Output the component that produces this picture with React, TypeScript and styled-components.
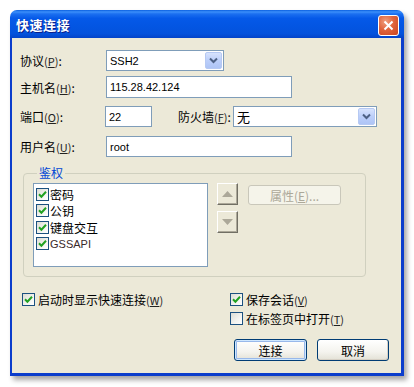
import React from "react";
import styled, { createGlobalStyle } from "styled-components";

const Global = createGlobalStyle`
  * { box-sizing: border-box; }
  body {
    margin: 0;
    padding: 10px;
    background: #ffffff;
    font-family: "Noto Sans CJK SC", "Liberation Sans", sans-serif;
    font-size: 12px;
    color: #000;
  }
`;

const Win = styled.div`
  width: 394px;
  height: 366px;
  display: flex;
  flex-direction: column;
  border-radius: 7px 7px 0 0;
  box-shadow: 3px 4px 5px rgba(0, 0, 0, 0.35);
`;

const TitleBar = styled.div`
  height: 28px;
  flex: none;
  display: flex;
  align-items: center;
  justify-content: space-between;
  padding: 0 5px 0 6px;
  border-radius: 7px 7px 0 0;
  background: linear-gradient(
    to bottom,
    #0a5fe0 0%,
    #3c8ffa 7%,
    #1b6ff0 14%,
    #0559e8 30%,
    #0355e2 60%,
    #0452dc 85%,
    #0343c9 100%
  );
`;

const Title = styled.span`
  color: #fff;
  font-weight: bold;
  font-size: 13px;
  letter-spacing: 0.5px;
  text-shadow: 1px 1px 0 #0a1e8a;
  padding-top: 1px;
`;

const CloseBtn = styled.div`
  width: 21px;
  height: 21px;
  margin-top: 2px;
  border: 1px solid #fff;
  border-radius: 3px;
  background: radial-gradient(circle at 35% 30%, #f0a080 0%, #e0643c 45%, #c84420 100%);
  display: flex;
  align-items: center;
  justify-content: center;
`;

const Body = styled.div`
  flex: 1;
  background: #ece9d8;
  border-left: 2px solid #0b3dcc;
  border-right: 3px solid #0b3dcc;
  border-bottom: 3px solid #0b3dcc;
  padding: 0 0 0 8px;
  display: flex;
  flex-direction: column;
`;

const Row = styled.div<{ $top: number; $h: number }>`
  display: flex;
  align-items: center;
  margin-top: ${(p) => p.$top}px;
  height: ${(p) => p.$h}px;
`;

const Label = styled.span<{ $w?: number; $pad?: number }>`
  width: ${(p) => (p.$w ? `${p.$w}px` : "auto")};
  padding-left: ${(p) => p.$pad ?? 0}px;
  flex: none;
  white-space: nowrap;
  font-size: 12px;
`;

const Key = styled.span`
  color: #222;
  font-size: 11px;
  & u { text-underline-offset: 1px; }
`;

const TextBox = styled.div<{ $w: number }>`
  width: ${(p) => p.$w}px;
  height: 100%;
  background: #fff;
  border: 1px solid #7f9db9;
  display: flex;
  align-items: center;
  padding-left: 3px;
  font-family: "Liberation Sans", sans-serif;
  font-size: 11px;
`;

const SelectBox = styled.div<{ $w: number }>`
  width: ${(p) => p.$w}px;
  height: 100%;
  background: #fff;
  border: 1px solid #7f9db9;
  display: flex;
  align-items: center;
  justify-content: space-between;
  padding: 1px 1px 1px 3px;
`;

const SelectValue = styled.span<{ $cjk?: boolean }>`
  font-family: ${(p) => (p.$cjk ? '"Noto Sans CJK SC", sans-serif' : '"Liberation Sans", sans-serif')};
  font-size: ${(p) => (p.$cjk ? 13 : 11)}px;
`;

const DropBtn = styled.div`
  width: 17px;
  height: 17px;
  border: 1px solid #b6c9f3;
  border-radius: 2px;
  background: linear-gradient(to bottom, #d7e3fd 0%, #bccffa 50%, #aec4f6 100%);
  display: flex;
  align-items: center;
  justify-content: center;
`;

const Group = styled.fieldset`
  margin: 9px 0 0 3px;
  width: 343px;
  height: 111px;
  border: 1px solid #d0d0bf;
  border-radius: 4px;
  padding: 3px 0 0 9px;
  display: flex;
  align-items: flex-start;
`;

const Legend = styled.legend`
  color: #0046d5;
  padding: 0 2px;
  margin-left: 4px;
  font-size: 12px;
  line-height: 14px;
`;

const ListBox = styled.div`
  width: 175px;
  height: 84px;
  background: #fff;
  border: 1px solid #7f9db9;
  padding: 2px 0 0 2px;
  display: flex;
  flex-direction: column;
`;

const ListItem = styled.div`
  height: 16.5px;
  display: flex;
  align-items: center;
  gap: 1px;
  font-size: 12px;
`;

const ListLatin = styled.span`
  font-family: "Liberation Sans", sans-serif;
  font-size: 11px;
  color: #3a2a2a;
`;

const ArrowCol = styled.div`
  display: flex;
  flex-direction: column;
  gap: 6px;
  margin-left: 9px;
`;

const ArrowBtn = styled.div`
  width: 21px;
  height: 22px;
  background: #ece9d8;
  border-top: 1px solid #fff;
  border-left: 1px solid #fff;
  border-right: 1px solid #716f64;
  border-bottom: 1px solid #716f64;
  box-shadow: inset -1px -1px 0 #aca899;
  display: flex;
  align-items: center;
  justify-content: center;
`;

const PropBtn = styled.div`
  width: 93px;
  height: 20px;
  margin: 2px 0 0 10px;
  border: 1px solid #c9c7ba;
  border-radius: 3px;
  background: #f5f4ea;
  color: #aca899;
  display: flex;
  align-items: center;
  justify-content: center;
  font-size: 12px;
`;

const Options = styled.div`
  display: grid;
  grid-template-columns: 208px 1fr;
  grid-auto-rows: 19px;
  margin: 13px 0 0 2px;
`;

const Check = styled.label<{ $col: number }>`
  grid-column: ${(p) => p.$col};
  display: flex;
  align-items: center;
  gap: 3px;
  font-size: 12px;
  white-space: nowrap;
`;

const Box = styled.span`
  width: 13px;
  height: 13px;
  flex: none;
  border: 1px solid #1c5180;
  background: linear-gradient(135deg, #dcdcd4 0%, #f4f4f0 60%, #ffffff 100%);
  display: flex;
  align-items: center;
  justify-content: center;
`;

const Buttons = styled.div`
  display: flex;
  justify-content: flex-end;
  gap: 10px;
  margin-top: 11px;
  padding-right: 12px;
`;

const Btn = styled.div<{ $default?: boolean; $w: number }>`
  width: ${(p) => p.$w}px;
  height: 22px;
  border: 1px solid #003c74;
  border-radius: 3px;
  background: linear-gradient(to bottom, #ffffff 0%, #f4f3ee 60%, #e3e1d6 100%);
  box-shadow: ${(p) =>
    p.$default
      ? "inset 0 0 0 1px #cee7ff, inset 0 0 0 2px #98b8ea"
      : "inset -1px -1px 0 #d6d0c5"};
  display: flex;
  align-items: center;
  justify-content: center;
  font-size: 12px;
`;

const Mn = ({ k }: { k: string }) => (
  <Key>
    (<u>{k}</u>)
  </Key>
);

const CheckBox = ({ checked }: { checked: boolean }) => (
  <Box>
    {checked && (
      <svg width="9" height="9" viewBox="0 0 9 9">
        <path d="M1 4.3 L3.4 6.7 L8 1.8" fill="none" stroke="#21a121" strokeWidth="2" />
      </svg>
    )}
  </Box>
);

const Chevron = () => (
  <svg width="9" height="7" viewBox="0 0 9 7">
    <path d="M1 1.5 L4.5 5 L8 1.5" fill="none" stroke="#4d6185" strokeWidth="2" />
  </svg>
);

export default function App() {
  return (
    <>
      <Global />
      <Win>
        <TitleBar>
          <Title>快速连接</Title>
          <CloseBtn>
            <svg width="11" height="11" viewBox="0 0 11 11">
              <path d="M1.5 1.5 L9.5 9.5 M9.5 1.5 L1.5 9.5" stroke="#fff" strokeWidth="2" />
            </svg>
          </CloseBtn>
        </TitleBar>
        <Body>
          <Row $top={12} $h={21}>
            <Label $w={86}>
              协议<Mn k="P" />:
            </Label>
            <SelectBox $w={118}>
              <SelectValue>SSH2</SelectValue>
              <DropBtn>
                <Chevron />
              </DropBtn>
            </SelectBox>
          </Row>
          <Row $top={5} $h={22}>
            <Label $w={86}>
              主机名<Mn k="H" />:
            </Label>
            <TextBox $w={186}>115.28.42.124</TextBox>
          </Row>
          <Row $top={8} $h={21}>
            <Label $w={85}>
              端口<Mn k="O" />:
            </Label>
            <TextBox $w={47}>22</TextBox>
            <Label $w={81} $pad={26}>
              防火墙<Mn k="F" />:
            </Label>
            <SelectBox $w={144}>
              <SelectValue $cjk>无</SelectValue>
              <DropBtn>
                <Chevron />
              </DropBtn>
            </SelectBox>
          </Row>
          <Row $top={9} $h={21}>
            <Label $w={86}>
              用户名<Mn k="U" />:
            </Label>
            <TextBox $w={186}>root</TextBox>
          </Row>
          <Group>
            <Legend>鉴权</Legend>
            <ListBox>
              <ListItem>
                <CheckBox checked />
                <span>密码</span>
              </ListItem>
              <ListItem>
                <CheckBox checked />
                <span>公钥</span>
              </ListItem>
              <ListItem>
                <CheckBox checked />
                <span>键盘交互</span>
              </ListItem>
              <ListItem>
                <CheckBox checked />
                <ListLatin>GSSAPI</ListLatin>
              </ListItem>
            </ListBox>
            <ArrowCol>
              <ArrowBtn>
                <svg width="11" height="6" viewBox="0 0 11 6">
                  <path d="M0 6 L5.5 0 L11 6 Z" fill="#aca899" />
                </svg>
              </ArrowBtn>
              <ArrowBtn>
                <svg width="11" height="6" viewBox="0 0 11 6">
                  <path d="M0 0 L5.5 6 L11 0 Z" fill="#aca899" />
                </svg>
              </ArrowBtn>
            </ArrowCol>
            <PropBtn>
              属性(<u>E</u>)...
            </PropBtn>
          </Group>
          <Options>
            <Check $col={1}>
              <CheckBox checked />
              <span>
                启动时显示快速连接<Mn k="W" />
              </span>
            </Check>
            <Check $col={2}>
              <CheckBox checked />
              <span>
                保存会话<Mn k="V" />
              </span>
            </Check>
            <Check $col={2}>
              <CheckBox checked={false} />
              <span>
                在标签页中打开<Mn k="T" />
              </span>
            </Check>
          </Options>
          <Buttons>
            <Btn $default $w={73}>
              连接
            </Btn>
            <Btn $w={72}>取消</Btn>
          </Buttons>
        </Body>
      </Win>
    </>
  );
}
